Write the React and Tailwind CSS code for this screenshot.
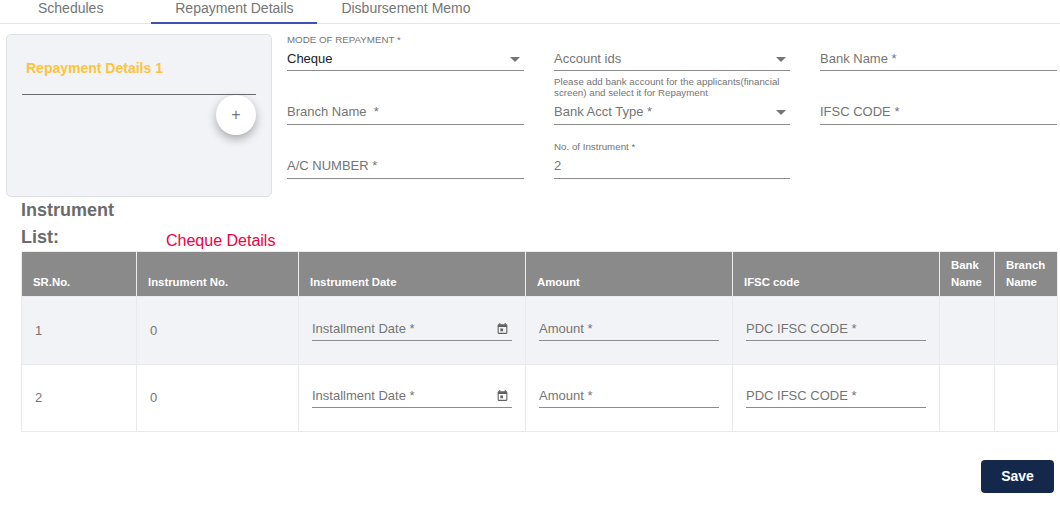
import React from 'react';

function CaretDown() {
  return (
    <svg width="10" height="5" viewBox="0 0 10 5" className="shrink-0 mr-[4px]">
      <path d="M0 0h10L5 5z" fill="#757575" />
    </svg>
  );
}

function CalendarIcon() {
  return (
    <svg width="13" height="13" viewBox="0 0 24 24" className="shrink-0 mr-[3px]">
      <path
        fill="#616161"
        d="M19 4h-1V2h-2v2H8V2H6v2H5c-1.1 0-2 .9-2 2v14c0 1.1.9 2 2 2h14c1.1 0 2-.9 2-2V6c0-1.1-.9-2-2-2zm0 16H5V9h14v11zM8 12h5v5H8z"
      />
    </svg>
  );
}

function Field({ label, value, floated, select, help, lift }) {
  return (
    <div className="relative h-[54px]">
      {floated && (
        <div className={(lift ? 'top-[-1px] ' : 'top-0 ') + 'absolute left-0 text-[9.75px] leading-[12px] text-[#757575] whitespace-nowrap'}>{floated}</div>
      )}
      <div className={(lift ? 'pb-[2px] ' : '') + 'absolute left-0 right-0 top-[14px] h-[23px] border-b border-[#8c8c8c] flex items-center justify-between'}>
        <span className={value === 'Cheque' ? 'text-[13px] text-[#212121] whitespace-pre' : 'text-[13px] text-[#757575] whitespace-pre'}>{value || label}</span>
        {select && <CaretDown />}
      </div>
      {help && (
        <div className="absolute left-0 top-[42px] text-[9.75px] leading-[11px] text-[#757575]">{help}</div>
      )}
    </div>
  );
}

function CellInput({ label, date }) {
  return (
    <div className="h-[24px] border-b border-[#8c8c8c] flex items-center justify-between">
      <span className="text-[13px] text-[#757575]">{label}</span>
      {date && <CalendarIcon />}
    </div>
  );
}

const headers = [
  { name: 'SR.No.', w: 'w-[115px]' },
  { name: 'Instrument No.', w: 'w-[162px]' },
  { name: 'Instrument Date', w: 'w-[227px]' },
  { name: 'Amount', w: 'w-[207px]' },
  { name: 'IFSC code', w: 'w-[207px]' },
  { name: 'Bank Name', w: 'w-[55px]' },
  { name: 'Branch Name', w: 'w-[63px]' },
];

function Row({ n, shaded, h, pad }) {
  const td = 'border border-[#e9e9e9] px-[13px] text-[13px] text-[#757575] align-middle';
  return (
    <tr className={(shaded ? 'bg-[#f2f3f6] ' : 'bg-white ') + h}>
      <td className={td}>{n}</td>
      <td className={td}>0</td>
      <td className={td}><div className={pad}><CellInput label="Installment Date *" date /></div></td>
      <td className={td}><div className={pad}><CellInput label="Amount *" /></div></td>
      <td className={td}><div className={pad}><CellInput label="PDC IFSC CODE *" /></div></td>
      <td className={td}></td>
      <td className={td}></td>
    </tr>
  );
}

export default function App() {
  return (
    <div className="w-[1060px] h-[511px] bg-white overflow-hidden font-['Liberation_Sans',sans-serif]">
      <div className="flex h-[24px] border-b border-[#e4e4e4] text-[14px] leading-[16px] text-[#757575]">
        <div className="pl-[38px] pr-[48px]">Schedules</div>
        <div className="w-[166px] h-[24px] text-center border-b-[2px] border-[#3f51b5]">Repayment Details</div>
        <div className="pl-[24px]">Disbursement Memo</div>
      </div>

      <div className="flex pt-[10px] pl-[6px] pr-[3px]">
        <div className="relative w-[266px] h-[163px] bg-[#f2f3f6] border border-[#dfe0e2] rounded-[5px]">
          <div className="mx-[15px] h-[60px] border-b border-[#6b6b6b] pt-[24px] pl-[4px] text-[14px] leading-[18px] font-bold text-[#fcc43e]">
            Repayment Details 1
          </div>
          <div className="absolute right-[15px] top-[60px] w-[40px] h-[40px] rounded-full bg-white shadow-[0_4px_10px_rgba(0,0,0,0.3)] flex items-center justify-center text-[16px] text-[#757575]">
            +
          </div>
        </div>

        <div className="ml-[15px] flex-1 grid grid-cols-[237px_236px_237px] gap-x-[30px] content-start">
          <Field value="Cheque" floated="MODE OF REPAYMENT *" select />
          <Field label="Account ids" select help="Please add bank account for the applicants(financial screen) and select it for Repayment" />
          <Field label="Bank Name *" />
          <Field label="Branch Name  *" lift />
          <Field label="Bank Acct Type *" select lift />
          <Field label="IFSC CODE *" lift />
          <Field label="A/C NUMBER *" lift />
          <Field value="2" floated="No. of Instrument *" lift />
        </div>
      </div>

      <div className="flex pl-[21px] h-[54px]">
        <h3 className="w-[145px] text-[18px] leading-[27px] font-bold text-[#6b6b6b]">
          Instrument<br />List:
        </h3>
        <div className="pt-[34px] text-[16px] leading-[20px] text-[#ee0044]">Cheque Details</div>
      </div>

      <div className="pl-[21px]">
        <table className="table-fixed w-[1036px] border-collapse">
          <thead>
            <tr className="h-[45px] bg-[#8a8a8a]">
              {headers.map((h) => (
                <th key={h.name} className={h.w + ' border border-[#ededed] px-[11px] pb-[5px] align-bottom text-left text-[11.375px] leading-[17px] font-bold text-white'}>
                  {h.name}
                </th>
              ))}
            </tr>
          </thead>
          <tbody>
            <Row n={1} shaded h="h-[68px]" pad="pb-[3px]" />
            <Row n={2} h="h-[67px]" pad="pb-[4px]" />
          </tbody>
        </table>
      </div>

      <div className="flex justify-end pr-[6px] pt-[28px]">
        <button className="w-[73px] h-[33px] rounded-[4px] bg-[#14284b] text-white text-[14px] font-bold">Save</button>
      </div>
    </div>
  );
}
